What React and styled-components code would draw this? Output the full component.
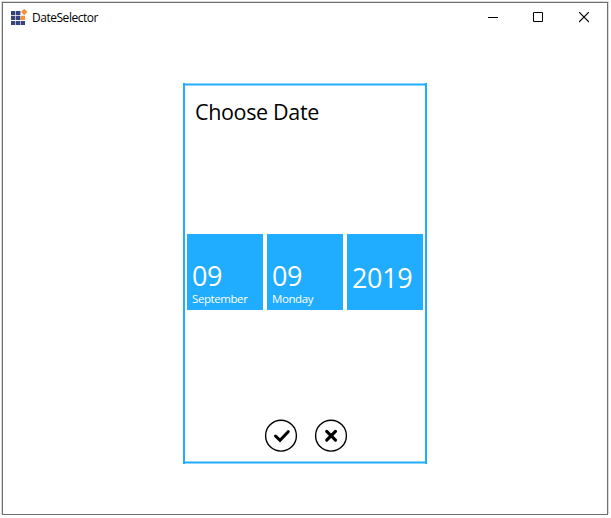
import React from "react";
import styled, { createGlobalStyle } from "styled-components";

const PageStyle = createGlobalStyle`
  body { margin: 0; background: #fff; font-family: "Open Sans", "Noto Sans", sans-serif; }
  * { box-sizing: border-box; }
`;

const Page = styled.div`
  width: 611px;
  height: 518px;
  padding: 2px;
  overflow: hidden;
`;

const Window = styled.main`
  width: 606px;
  height: 513px;
  border: 1px solid #6f6f6f;
  box-shadow: 1px -1px 0 #d9d9d9, -1px -1px 0 #d9d9d9;
  background: #fff;
`;

const TitleBar = styled.header`
  display: flex;
  align-items: center;
  height: 29px;
  padding-left: 8px;
`;

const AppIcon = styled.svg`
  display: block;
  flex: none;
  width: 17px;
  height: 17px;
  margin-right: 4px;
`;

const Title = styled.h1`
  flex: 1;
  margin: 0;
  font-size: 12px;
  line-height: 16px;
  font-weight: 400;
  letter-spacing: -0.47px;
  color: #000;
`;

const CaptionButton = styled.button`
  display: grid;
  place-items: center;
  width: 46px;
  height: 29px;
  padding: 0;
  border: 0;
  background: none;
`;

const Content = styled.div`
  display: flex;
  justify-content: center;
  padding-top: 51px;
`;

const Panel = styled.section`
  display: flex;
  flex-direction: column;
  width: 244px;
  height: 381px;
  border: 2px solid #20acff;
  border-top: 0;
  border-bottom: 0;
  background: linear-gradient(#90d5ff 1px, #20acff 1px 2px, #90d5ff 2px 3px, #fff 3px 378px, #90d5ff 378px 379px, #20acff 379px 380px, #90d5ff 380px);
`;

const Heading = styled.h2`
  margin: 14px 0 0 10px;
  height: 30px;
  font-size: 21.5px;
  line-height: 30px;
  font-weight: 400;
  letter-spacing: -0.35px;
  color: #000;
`;

const Tiles = styled.div`
  display: flex;
  gap: 4px;
  margin: 107px 0 0 2px;
`;

const Tile = styled.div`
  display: flex;
  flex-direction: column;
  width: 76px;
  height: 76px;
  padding: ${({ $single }) => ($single ? "29px" : "27px")} 0 0 5px;
  background: #20acff;
  color: #fff;
`;

const Value = styled.span`
  height: 30px;
  font-size: 27px;
  line-height: 30px;
  letter-spacing: -0.35px;
`;

const Caption = styled.span`
  font-size: 11.5px;
  line-height: 16px;
  font-weight: 400;
  letter-spacing: -0.42px;
`;

const Actions = styled.footer`
  display: flex;
  justify-content: center;
  gap: 16px;
  margin: 109px 0 0 2px;
`;

const RoundButton = styled.button`
  width: 34px;
  height: 34px;
  padding: 0;
  border: 0;
  background: none;
  svg { display: block; }
`;

const tiles = [
  { value: "09", caption: "September" },
  { value: "09", caption: "Monday" },
  { value: "2019" },
];

export default function App() {
  return (
    <Page>
      <PageStyle />
      <Window>
        <TitleBar>
          <AppIcon viewBox="0 0 17 17">
            <path fill="#35427d" d="M0 2h4.4v4H0zM5 2h4.4v4H5zM0 6.7h4.4v4.4H0zM5 6.7h4.4v4.4H5zM0 12h4.4v4H0zM5 12h4.4v4H5zM10 12h4v4h-4z" />
            <path fill="#f69233" d="M10 6.7h4v4.4h-4zM13.2-.2l3.2 3.2-3.2 3.2L10 3z" />
          </AppIcon>
          <Title>DateSelector</Title>
          <CaptionButton aria-label="Minimize">
            <svg width="12" height="11"><path d="M2 5.5h10" stroke="#000" /></svg>
          </CaptionButton>
          <CaptionButton aria-label="Maximize">
            <svg width="10" height="11"><path d="M.5 .5h9v9h-9z" fill="none" stroke="#000" /></svg>
          </CaptionButton>
          <CaptionButton aria-label="Close">
            <svg width="10" height="11"><path d="M0 0l10 10M10 0L0 10" stroke="#000" strokeWidth="1.2" /></svg>
          </CaptionButton>
        </TitleBar>
        <Content>
          <Panel>
            <Heading>Choose Date</Heading>
            <Tiles>
              {tiles.map((t, i) => (
                <Tile key={i} $single={!t.caption}>
                  <Value>{t.value}</Value>
                  {t.caption && <Caption>{t.caption}</Caption>}
                </Tile>
              ))}
            </Tiles>
            <Actions>
              <RoundButton aria-label="Accept">
                <svg width="34" height="34" fill="none" stroke="#000">
                  <circle cx="17" cy="16.7" r="15.4" strokeWidth="1.4" />
                  <path d="M11.5 17l4.5 4.4 8.2-8.7" strokeWidth="3" strokeLinecap="round" />
                </svg>
              </RoundButton>
              <RoundButton aria-label="Cancel">
                <svg width="34" height="34" fill="none" stroke="#000">
                  <circle cx="17" cy="16.7" r="15.4" strokeWidth="1.4" />
                  <path d="M12.7 12.3l8.8 8.8M21.5 12.3l-8.8 8.8" strokeWidth="3.1" strokeLinecap="round" />
                </svg>
              </RoundButton>
            </Actions>
          </Panel>
        </Content>
      </Window>
    </Page>
  );
}
